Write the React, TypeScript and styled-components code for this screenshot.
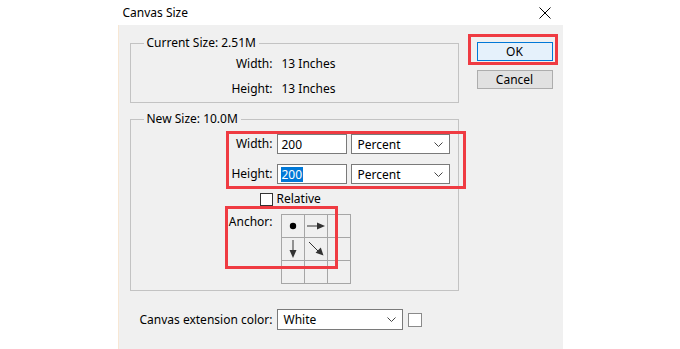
import styled, { createGlobalStyle } from 'styled-components'

const GlobalStyle = createGlobalStyle`
  html, body {
    margin: 0;
    padding: 0;
    background: #fff;
  }
  body {
    font-family: 'Noto Sans', 'Liberation Sans', sans-serif;
    font-size: 12px;
    color: #000;
  }
`

const Dialog = styled.div`
  width: 445px;
  height: 349px;
  margin: 0 auto;
  display: flex;
  flex-direction: column;
  overflow: hidden;
`

const TitleBar = styled.div`
  height: 25px;
  flex: none;
  display: flex;
  align-items: center;
  justify-content: space-between;
  padding: 0 12px 0 5px;
`

const Body = styled.div`
  flex: 1;
  background: #f0f0f0;
  border-left: 1px solid #f7e7d4;
  display: flex;
  gap: 18px;
  padding: 10px 0 0 11px;
`

const LeftColumn = styled.div`
  width: 329px;
  display: flex;
  flex-direction: column;
  gap: 8px;
`

const RightColumn = styled.div`
  display: flex;
  flex-direction: column;
  gap: 9px;
  padding-top: 7px;
`

const Group = styled.fieldset<{ $pad: string }>`
  margin: 0;
  padding: ${(p) => p.$pad};
  border: 1px solid #c3c3c3;
  min-width: 0;
`

const Legend = styled.legend`
  margin-left: 13px;
  padding: 0 3px;
  line-height: 16px;
`

const FieldGrid = styled.div<{ $rowGap?: number; $labelWidth?: number; $align?: string }>`
  display: grid;
  grid-template-columns: ${(p) => p.$labelWidth ?? 142}px auto;
  column-gap: 4px;
  row-gap: ${(p) => p.$rowGap ?? 0}px;
  align-items: ${(p) => p.$align ?? 'center'};
  justify-items: start;
`

const Label = styled.span`
  justify-self: end;
  line-height: 16px;
  white-space: nowrap;
`

const ValueText = styled.span`
  padding-left: 5px;
  line-height: 20px;
`

const PlainText = styled.span`
  line-height: 16px;
`

const Controls = styled.div`
  display: flex;
  gap: 4px;
  align-items: center;
`

const TextBox = styled.div<{ $width: number }>`
  box-sizing: border-box;
  width: ${(p) => p.$width}px;
  height: 20px;
  border: 1px solid #7a7a7a;
  background: #fff;
  padding: 0 4px;
  display: flex;
  align-items: center;
`

const Selected = styled.span`
  background: #0078d7;
  color: #fff;
  line-height: 15px;
  margin-left: -1px;
  padding: 0 1px;
`

const Select = styled.div<{ $width: number; $height: number }>`
  box-sizing: border-box;
  width: ${(p) => p.$width}px;
  height: ${(p) => p.$height}px;
  border: 1px solid #7a7a7a;
  background: #fff;
  padding: 0 6px 0 6px;
  display: flex;
  align-items: center;
  justify-content: space-between;
`

const Marked = styled.div<{ $inset: string; $gapTop?: number }>`
  position: relative;
  margin-top: ${(p) => p.$gapTop ?? 0}px;
  &::after {
    content: '';
    position: absolute;
    inset: ${(p) => p.$inset};
    border: 3px solid #ef3b42;
    pointer-events: none;
  }
`

const CheckRow = styled(FieldGrid)`
  margin-top: 7px;
`

const CheckBox = styled.span`
  justify-self: end;
  box-sizing: border-box;
  width: 13px;
  height: 13px;
  border: 1px solid #333;
  background: #fff;
`

const AnchorGrid = styled.div`
  margin-left: 4px;
  display: grid;
  grid-template-columns: repeat(3, 22px);
  grid-template-rows: repeat(3, 22px);
  gap: 1px;
  border: 1px solid #a6a6a6;
  background: #a6a6a6;
`

const AnchorCell = styled.div`
  background: #f0f0f0;
  display: flex;
  align-items: center;
  justify-content: center;
`

const Button = styled.button<{ $primary?: boolean }>`
  box-sizing: border-box;
  width: 76px;
  height: 19px;
  padding: 0;
  font: inherit;
  color: #000;
  line-height: 16px;
  background: ${(p) => (p.$primary ? '#e5f1fb' : '#e1e1e1')};
  border: 1px solid ${(p) => (p.$primary ? '#0078d7' : '#adadad')};
`

const Swatch = styled.span`
  box-sizing: border-box;
  width: 14px;
  height: 14px;
  border: 1px solid #8a8a8a;
  background: #fff;
`

const ColorRow = styled.div`
  display: flex;
  align-items: center;
  gap: 5px;
`

const ExtensionRow = styled(FieldGrid)`
  margin-top: 10px;
`

const Chevron = () => (
  <svg width="9" height="5" viewBox="0 0 9 5">
    <path d="M0.5 0.5 L4.5 4.5 L8.5 0.5" fill="none" stroke="#444" strokeWidth="1" />
  </svg>
)

const CloseIcon = () => (
  <svg width="12" height="12" viewBox="0 0 12 12">
    <path d="M0.5 0.5 L11.5 11.5 M11.5 0.5 L0.5 11.5" stroke="#000" strokeWidth="1" />
  </svg>
)

type AnchorMark = 'dot' | 'right' | 'down' | 'diag' | 'none'

const Arrow = ({ dir }: { dir: AnchorMark }) => {
  if (dir === 'none') return null
  return (
    <svg width="22" height="22" viewBox="0 0 22 22">
      {dir === 'dot' && <circle cx="11" cy="11" r="3.2" fill="#000" />}
      {dir === 'right' && (
        <>
          <path d="M2 11 H14" stroke="#333" strokeWidth="1" />
          <path d="M12 7.5 L20 11 L12 14.5 Z" fill="#333" />
        </>
      )}
      {dir === 'down' && (
        <>
          <path d="M11 2 V14" stroke="#333" strokeWidth="1" />
          <path d="M7.5 12 L11 20 L14.5 12 Z" fill="#333" />
        </>
      )}
      {dir === 'diag' && (
        <>
          <path d="M4 4 L14 14" stroke="#333" strokeWidth="1" />
          <path d="M18.5 17.5 L10.6 14.8 L15.8 9.6 Z" fill="#333" />
        </>
      )}
    </svg>
  )
}

const anchorCells: AnchorMark[] = [
  'dot', 'right', 'none',
  'down', 'diag', 'none',
  'none', 'none', 'none',
]

export default function App() {
  return (
    <>
      <GlobalStyle />
      <Dialog>
        <TitleBar>
          <span>Canvas Size</span>
          <CloseIcon />
        </TitleBar>
        <Body>
          <LeftColumn>
            <Group $pad="3px 0 3px">
              <Legend>Current Size: 2.51M</Legend>
              <FieldGrid $rowGap={5}>
                <Label>Width:</Label>
                <ValueText>13 Inches</ValueText>
                <Label>Height:</Label>
                <ValueText>13 Inches</ValueText>
              </FieldGrid>
            </Group>

            <Group $pad="7px 0 6px">
              <Legend>New Size: 10.0M</Legend>
              <Marked $inset="-3px -8px -5px 95px">
                <FieldGrid $rowGap={10}>
                  <Label>Width:</Label>
                  <Controls>
                    <TextBox $width={70}>200</TextBox>
                    <Select $width={99} $height={20}>
                      Percent
                      <Chevron />
                    </Select>
                  </Controls>
                  <Label>Height:</Label>
                  <Controls>
                    <TextBox $width={70}>
                      <Selected>200</Selected>
                    </TextBox>
                    <Select $width={99} $height={20}>
                      Percent
                      <Chevron />
                    </Select>
                  </Controls>
                </FieldGrid>
              </Marked>
              <CheckRow>
                <CheckBox />
                <PlainText>Relative</PlainText>
              </CheckRow>
              <Marked $inset="-8px 120px 15px 94px" $gapTop={7}>
                <FieldGrid $align="start">
                  <Label>Anchor:</Label>
                  <AnchorGrid>
                    {anchorCells.map((c, i) => (
                      <AnchorCell key={i}>
                        <Arrow dir={c} />
                      </AnchorCell>
                    ))}
                  </AnchorGrid>
                </FieldGrid>
              </Marked>
            </Group>

            <ExtensionRow $labelWidth={143}>
              <Label>Canvas extension color:</Label>
              <ColorRow>
                <Select $width={126} $height={21}>
                  White
                  <Chevron />
                </Select>
                <Swatch />
              </ColorRow>
            </ExtensionRow>
          </LeftColumn>

          <RightColumn>
            <Marked $inset="-8px -5px -4px -9px">
              <Button $primary>OK</Button>
            </Marked>
            <Button>Cancel</Button>
          </RightColumn>
        </Body>
      </Dialog>
    </>
  )
}
